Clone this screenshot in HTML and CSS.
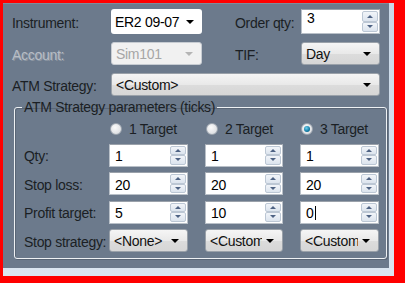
FILE: index.html
```html
<!DOCTYPE html>
<html lang="en-US">

<head>
    <meta charset="UTF-8">
    <title>Order Entry</title>
    <link rel="stylesheet" href="styles.css">
</head>

<body>
    <div class="frame">
        <div class="panel">
            <div class="top-grid">
                <span class="label">Instrument:</span>
                <div class="combo white"><span class="value">ER2 09-07</span><span class="arrow"></span></div>
                <span></span>
                <span class="label">Order qty:</span>
                <div class="spin qty">
                    <span class="value top">3</span>
                    <div class="spin-btns"><span class="up"></span><span class="down"></span></div>
                </div>

                <span class="label disabled">Account:</span>
                <div class="combo disabled"><span class="value">Sim101</span><span class="arrow"></span></div>
                <span></span>
                <span class="label">TIF:</span>
                <div class="combo btn"><span class="value">Day</span><span class="arrow"></span></div>

                <span class="label">ATM Strategy:</span>
                <div class="combo btn wide"><span class="value">&lt;Custom&gt;</span><span class="arrow"></span></div>
            </div>

            <fieldset class="group">
                <legend>ATM Strategy parameters (ticks)</legend>
                <div class="param-grid">
                    <span></span>
                    <label class="radio-item"><span class="radio"></span>1 Target</label>
                    <label class="radio-item"><span class="radio"></span>2 Target</label>
                    <label class="radio-item"><span class="radio checked"></span>3 Target</label>

                    <span class="label">Qty:</span>
                    <div class="spin"><span class="value">1</span><div class="spin-btns"><span class="up"></span><span class="down"></span></div></div>
                    <div class="spin"><span class="value">1</span><div class="spin-btns"><span class="up"></span><span class="down"></span></div></div>
                    <div class="spin"><span class="value">1</span><div class="spin-btns"><span class="up"></span><span class="down"></span></div></div>

                    <span class="label">Stop loss:</span>
                    <div class="spin"><span class="value">20</span><div class="spin-btns"><span class="up"></span><span class="down"></span></div></div>
                    <div class="spin"><span class="value">20</span><div class="spin-btns"><span class="up"></span><span class="down"></span></div></div>
                    <div class="spin"><span class="value">20</span><div class="spin-btns"><span class="up"></span><span class="down"></span></div></div>

                    <span class="label">Profit target:</span>
                    <div class="spin"><span class="value">5</span><div class="spin-btns"><span class="up"></span><span class="down"></span></div></div>
                    <div class="spin"><span class="value">10</span><div class="spin-btns"><span class="up"></span><span class="down"></span></div></div>
                    <div class="spin"><span class="value">0<span class="caret"></span></span><div class="spin-btns"><span class="up"></span><span class="down"></span></div></div>

                    <span class="label">Stop strategy:</span>
                    <div class="combo btn"><span class="value">&lt;None&gt;</span><span class="arrow"></span></div>
                    <div class="combo btn"><span class="value">&lt;Custom</span><span class="arrow"></span></div>
                    <div class="combo btn"><span class="value">&lt;Custom</span><span class="arrow"></span></div>
                </div>
            </fieldset>
        </div>
    </div>
</body>

</html>
```

FILE: styles.css
```css
body {
    margin: 0;
    width: 405px;
    height: 283px;
    overflow: hidden;
    background: #ff0000;
    font-family: "Liberation Sans", Arial, sans-serif;
    font-size: 14px;
    letter-spacing: -0.3px;
    color: #1b1f24;
}

.frame {
    margin: 3px 11px 0 3px;
    height: 273px;
    box-sizing: border-box;
    padding: 0 5px 8px 0;
    background: linear-gradient(to bottom, #c9d8e8, #dbe6f1);
}

.panel {
    height: 100%;
    box-sizing: border-box;
    padding: 5px 2px 0 9px;
    background: #6c7a8c;
    border-top: 1px solid #7f8c9c;
}

.top-grid {
    display: grid;
    grid-template-columns: 99px 91px 33px 66px 79px;
    grid-template-rows: 25px 23px 23px;
    row-gap: 8px;
    align-items: center;
}

.label {
    white-space: nowrap;
    padding-top: 2px;
}

.label.disabled {
    color: #b7bdc5;
    text-shadow: 1px 1px 0 #8c96a2;
}

/* combo boxes */
.combo {
    display: flex;
    align-items: center;
    height: 100%;
    box-sizing: border-box;
    border-radius: 3px;
    overflow: hidden;
}

.combo .value {
    flex: 1;
    padding-left: 4px;
    white-space: nowrap;
    overflow: hidden;
}

.combo .arrow {
    width: 0;
    height: 0;
    margin: 0 8px 0 4px;
    border-left: 4px solid transparent;
    border-right: 4px solid transparent;
    border-top: 4px solid #000;
}

.combo.white {
    background: #fff;
    color: #000;
}

.combo.btn {
    background: linear-gradient(to bottom, #f5f5f5, #e9e9e9 50%, #dcdcdc 51%, #d6d6d6);
    border: 1px solid #9aa1a9;
    color: #111;
}

.combo.disabled {
    background: #f1f1f1;
    border: 1px solid #c7ccd2;
    color: #a6a6a6;
}

.combo.disabled .arrow {
    border-top-color: #b5b5b5;
}

.combo.wide {
    grid-column: 2 / 6;
}

/* spinners */
.spin {
    display: flex;
    height: 100%;
    box-sizing: border-box;
    background: #fff;
    border: 1px solid #b9c0c8;
    border-top-color: #9aa1aa;
    color: #000;
}

.spin .value {
    flex: 1;
    padding: 2px 0 0 5px;
    display: flex;
    align-items: center;
}

.spin .value.top {
    align-items: flex-start;
    padding-top: 0;
}

.spin-btns {
    display: flex;
    flex-direction: column;
    width: 16px;
    padding: 1px 1px 1px 0;
}

.spin-btns span {
    flex: 1;
    display: flex;
    align-items: center;
    justify-content: center;
    background: linear-gradient(to bottom, #f2f5f9, #dce4ee);
    border: 1px solid #bcc7d4;
    border-radius: 2px;
}

.spin-btns span::after {
    content: "";
    border-left: 3px solid transparent;
    border-right: 3px solid transparent;
}

.spin-btns .up::after {
    border-bottom: 3px solid #4e6384;
}

.spin-btns .down::after {
    border-top: 3px solid #4e6384;
}

.caret {
    display: inline-block;
    width: 1px;
    height: 14px;
    margin-left: 1px;
    background: #000;
}

/* group box */
.group {
    min-width: 0;
    margin: 3px 0 0 2px;
    padding: 7px 8px 6px 9px;
    border: 1px solid #eef1f4;
    border-radius: 3px;
    box-shadow: 1px 1px 0 #5a6676, inset 1px 1px 0 #5a6676;
}

.group legend {
    padding: 0 2px;
    margin-left: -2px;
}

.param-grid {
    display: grid;
    grid-template-columns: 68px 79px 78px 79px;
    grid-template-rows: 16px 23px 23px 23px 23px;
    column-gap: 17px;
    row-gap: 5.5px;
    align-items: center;
}

.param-grid > :nth-child(-n+4) {
    margin-bottom: 2.5px;
}

.radio-item {
    display: flex;
    align-items: center;
    gap: 7px;
    padding-left: 1px;
    white-space: nowrap;
}

.radio {
    width: 12px;
    height: 12px;
    box-sizing: border-box;
    border-radius: 50%;
    border: 1px solid #9ea6b0;
    background: radial-gradient(circle at 40% 35%, #fafafa, #d4d7db);
    display: flex;
    align-items: center;
    justify-content: center;
}

.radio.checked::after {
    content: "";
    width: 6px;
    height: 6px;
    border-radius: 50%;
    background: radial-gradient(circle at 40% 35%, #6fd0ef, #127aa3 60%, #0b4c6c);
}
```
